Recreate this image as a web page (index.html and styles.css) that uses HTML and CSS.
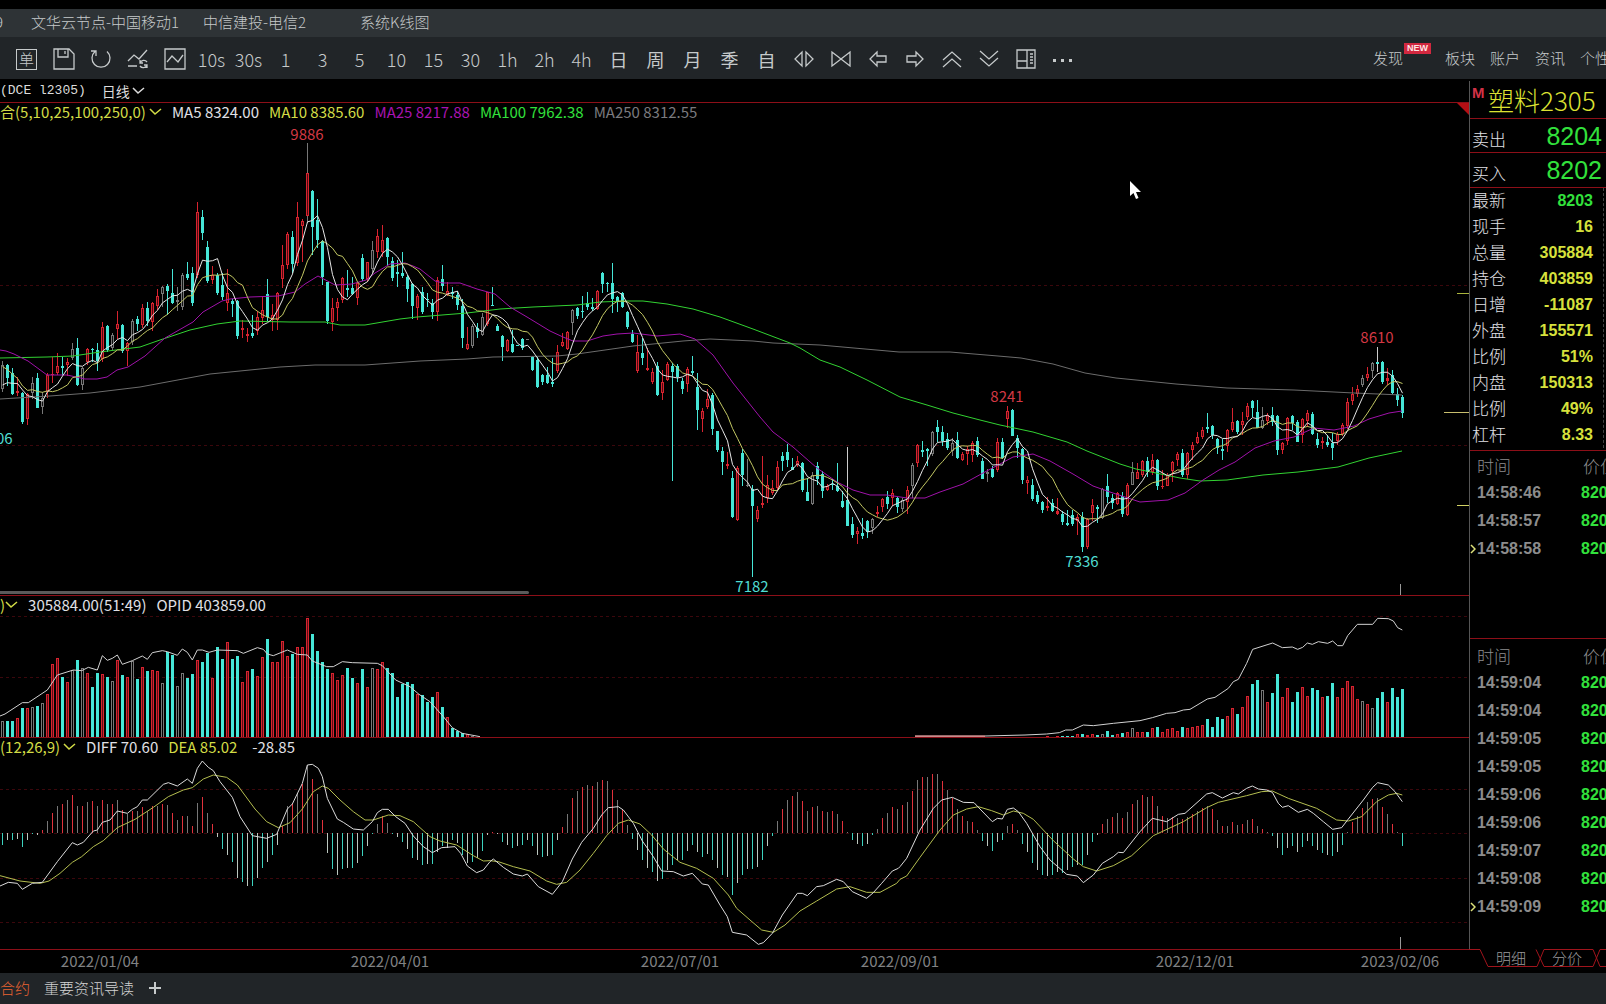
FILE: index.html
```html
<!DOCTYPE html>
<html lang="zh-CN">
<head>
<meta charset="utf-8">
<title>塑料2305 日线</title>
<link rel="stylesheet" href="styles.css">
</head>
<body>
<nav class="menubar" aria-label="节点">
  <a class="menu-edge" href="#">9</a>
  <a class="menu-node" href="#">文华云节点-中国移动1</a>
  <a class="menu-node" href="#">中信建投-电信2</a>
  <a class="menu-title" href="#">系统K线图</a>
</nav>

<header class="toolbar">
  <div class="tools">
    <button class="tool"><span class="tool-box">单</span></button>
    <button class="tool" aria-label="保存"><svg class="icon" viewBox="0 0 22 22"><path d="M1 1h15l5 5v15H1zM5 1v8h10V1M12 3v3"/></svg></button>
    <button class="tool" aria-label="刷新"><svg class="icon" viewBox="0 0 22 22"><path d="M5 3.500A9 9 0 1 0 17 3.500M1 3h5v5"/></svg></button>
    <button class="tool" aria-label="切换"><svg class="icon" viewBox="0 0 22 22"><path d="M1 13l6-6 5 4 8-9M1 18h9M20 14a4 4 0 0 0-7 1M13 12v3h3M13 18a4 4 0 0 0 7-1M20 20v-3h-3"/></svg></button>
    <button class="tool" aria-label="分时图"><svg class="icon" viewBox="0 0 22 22"><path d="M1 1h20v20H1zM3 14l5-6 6 6 5-7"/></svg></button>
    <button class="tool">10s</button>
    <button class="tool">30s</button>
    <button class="tool">1</button>
    <button class="tool">3</button>
    <button class="tool">5</button>
    <button class="tool">10</button>
    <button class="tool">15</button>
    <button class="tool">30</button>
    <button class="tool">1h</button>
    <button class="tool">2h</button>
    <button class="tool">4h</button>
    <button class="tool tool-han">日</button>
    <button class="tool tool-han">周</button>
    <button class="tool tool-han">月</button>
    <button class="tool tool-han">季</button>
    <button class="tool tool-han">自</button>
    <button class="tool" aria-label="放宽"><svg class="icon" viewBox="0 0 22 22"><path d="M9 4v14l-7-7zM13 4v14l7-7z"/></svg></button>
    <button class="tool" aria-label="收窄"><svg class="icon" viewBox="0 0 22 22"><path d="M2 4v14l9-7zM20 4v14l-9-7z"/></svg></button>
    <button class="tool" aria-label="左移"><svg class="icon" viewBox="0 0 22 22"><path d="M10 4l-7 7 7 7v-4h9V8h-9z"/></svg></button>
    <button class="tool" aria-label="右移"><svg class="icon" viewBox="0 0 22 22"><path d="M12 4l7 7-7 7v-4H3V8h9z"/></svg></button>
    <button class="tool" aria-label="上一个"><svg class="icon" viewBox="0 0 22 22"><path d="M2 12l9-8 9 8M2 19l9-8 9 8"/></svg></button>
    <button class="tool" aria-label="下一个"><svg class="icon" viewBox="0 0 22 22"><path d="M2 3l9 8 9-8M2 10l9 8 9-8"/></svg></button>
    <button class="tool" aria-label="布局"><svg class="icon" viewBox="0 0 22 22"><path d="M2 2h18v18H2zM12 2v18M2 13h10M15 6h3M15 9h3M15 12h3M15 15h3"/></svg></button>
    <button class="tool" aria-label="更多"><svg class="icon" viewBox="0 0 22 22"><path class="dots" d="M1 11h3v3H1zM9 11h3v3H9zM17 11h3v3h-3z"/></svg></button>
  </div>
  <nav class="links" aria-label="功能">
    <a class="link-new" href="#">发现<span class="badge">NEW</span></a>
    <a href="#">板块</a>
    <a href="#">账户</a>
    <a href="#">资讯</a>
    <a href="#">个性化</a>
  </nav>
</header>

<div class="workspace">
  <main class="charts">
    <div class="chart-head">
      <span class="code">(DCE l2305)</span>
      <button class="period">日线<svg class="chevron" viewBox="0 0 13 8"><path d="M1 1l5 5 6-5"/></svg></button>
    </div>
    <section class="pane pane-price">
      <div class="legend">
        <button class="legend-btn">合(5,10,25,100,250,0)<svg class="chevron" viewBox="0 0 13 8"><path d="M1 1l5 5 6-5"/></svg></button>
        <span class="c-white">MA5 8324.00</span>
        <span class="c-yellow">MA10 8385.60</span>
        <span class="c-purple">MA25 8217.88</span>
        <span class="c-green">MA100 7962.38</span>
        <span class="c-gray">MA250 8312.55</span>
      </div>
      <svg class="plot" id="price" role="img" aria-label="K线"></svg>
      <div class="scrollbar"></div>
    </section>
    <section class="pane pane-volume">
      <div class="legend">
        <button class="legend-btn legend-tight">)<svg class="chevron" viewBox="0 0 13 8"><path d="M1 1l5 5 6-5"/></svg></button>
        <span class="c-white">305884.00(51:49)</span>
        <span class="c-white">OPID 403859.00</span>
      </div>
      <svg class="plot" id="volume" role="img" aria-label="成交量"></svg>
    </section>
    <section class="pane pane-macd">
      <div class="legend">
        <button class="legend-btn">(12,26,9)<svg class="chevron" viewBox="0 0 13 8"><path d="M1 1l5 5 6-5"/></svg></button>
        <span class="c-white">DIFF 70.60</span>
        <span class="c-yellow">DEA 85.02</span>
        <span class="c-white last-value">-28.85</span>
      </div>
      <svg class="plot" id="macd" role="img" aria-label="MACD"></svg>
    </section>
    <svg class="axis" id="axis" role="img" aria-label="日期"></svg>
  </main>

  <aside class="panel">
    <div class="quote">
      <h1 class="contract"><span class="mark">M</span>塑料2305</h1>
      <dl class="book">
        <div><dt>卖出</dt><dd>8204</dd></div>
        <div><dt>买入</dt><dd>8202</dd></div>
      </dl>
      <dl class="stats">
        <div><dt>最新</dt><dd class="up">8203</dd></div>
        <div><dt>现手</dt><dd>16</dd></div>
        <div><dt>总量</dt><dd>305884</dd></div>
        <div><dt>持仓</dt><dd>403859</dd></div>
        <div><dt>日增</dt><dd>-11087</dd></div>
        <div><dt>外盘</dt><dd>155571</dd></div>
        <div><dt>比例</dt><dd>51%</dd></div>
        <div><dt>内盘</dt><dd>150313</dd></div>
        <div><dt>比例</dt><dd>49%</dd></div>
        <div><dt>杠杆</dt><dd>8.33</dd></div>
      </dl>
      <div class="ticks ticks-top">
        <table>
          <thead><tr><th class="flag"></th><th class="time">时间</th><th>价位</th></tr></thead>
          <tbody>
            <tr><td></td><td>14:58:46</td><td>8203</td></tr>
            <tr><td></td><td>14:58:57</td><td>8203</td></tr>
            <tr><td><svg class="pointer" viewBox="0 0 6 10"><path d="M1 1l4 4-4 4"/></svg></td><td>14:58:58</td><td>8203</td></tr>
          </tbody>
        </table>
      </div>
      <div class="ticks ticks-all">
        <table>
          <thead><tr><th class="flag"></th><th class="time">时间</th><th>价位</th></tr></thead>
          <tbody>
            <tr><td></td><td>14:59:04</td><td>8203</td></tr>
            <tr><td></td><td>14:59:04</td><td>8203</td></tr>
            <tr><td></td><td>14:59:05</td><td>8203</td></tr>
            <tr><td></td><td>14:59:05</td><td>8203</td></tr>
            <tr><td></td><td>14:59:06</td><td>8203</td></tr>
            <tr><td></td><td>14:59:06</td><td>8203</td></tr>
            <tr><td></td><td>14:59:07</td><td>8203</td></tr>
            <tr><td></td><td>14:59:08</td><td>8203</td></tr>
            <tr><td><svg class="pointer" viewBox="0 0 6 10"><path d="M1 1l4 4-4 4"/></svg></td><td>14:59:09</td><td>8203</td></tr>
          </tbody>
        </table>
      </div>
    </div>
    <div class="tabs">
      <svg class="tab-lines" aria-hidden="true"><path d="M0 .5h11l8 17h49l7-17h49l7 17h9M67 .5l8 17h49l7-17h9"/></svg>
      <button>明细</button>
      <button>分价</button>
    </div>
  </aside>
</div>

<footer class="bottombar">
  <a class="hot" href="#">合约</a>
  <a href="#">重要资讯导读</a>
  <button aria-label="新增"><svg class="plus" viewBox="0 0 14 14"><path d="M7 1v12M1 7h12"/></svg></button>
</footer>

<svg class="cursor" viewBox="0 0 12 18" aria-hidden="true"><path d="M0 0v15l3.500-3 2.500 6 2.500-1-2.500-6H11z"/></svg>
<script src="chart.js"></script>
</body>
</html>
```

FILE: styles.css
```css
* { box-sizing: border-box; }

body {
  margin: 0;
  padding-top: 9px;
  min-height: 100vh;
  display: flex;
  flex-direction: column;
  overflow: hidden;
  background: #000;
  color: #c6cacb;
  font: 15px/20px "Noto Sans CJK SC", "Noto Sans", sans-serif;
}

a { color: inherit; text-decoration: none; white-space: nowrap; }
button { border: 0; padding: 0; background: none; color: inherit; font: inherit; white-space: nowrap; }
dl, dd, h1 { margin: 0; }
svg { display: block; flex: none; fill: none; }

.menubar { display: flex; align-items: center; height: 28px; padding-bottom: 2px; background: #2e3336; font-weight: 300; }
.menu-edge { width: 31px; direction: rtl; padding-right: 28px; }
.menu-node { margin-right: 24px; }
.menu-title { margin-left: 30px; }

.toolbar { display: flex; align-items: center; height: 42px; padding-left: 8px; background: #212528; font-weight: 300; }
.tools { display: flex; flex: none; }
.tool {
  display: flex; align-items: center; justify-content: center;
  width: 37px; height: 42px; padding-top: 2px;
  font-size: 18px; line-height: 40px; font-weight: 300;
}
.tool-han { font-weight: 400; }
.tool-box { width: 21px; height: 21px; border: 1px solid #c6cacb; font-size: 15px; line-height: 18px; }
.icon { width: 22px; height: 22px; stroke: #c6cacb; stroke-width: 1.3; }
.dots { fill: #c6cacb; stroke: none; }

.links { display: flex; gap: 15px; margin-left: auto; width: 233px; overflow: hidden; }
.link-new { display: flex; width: 57px; height: 42px; padding-top: 11px; }
.links a:not(.link-new) { padding-top: 11px; }
.badge {
  margin: -5px 0 0 1px; height: 11px; padding: 0 3px;
  background: #d2283f; color: #ffe4e6;
  font: bold 9px/11px "Liberation Sans", sans-serif;
}

.workspace { display: flex; flex: 1; }
.charts { flex: 1; min-width: 0; display: flex; flex-direction: column; }
.chart-head { display: flex; align-items: center; gap: 16px; height: 24px; border-bottom: 1px solid #8c0f18; color: #dcdcdc; }
.code { font: 13px/20px "Liberation Mono", monospace; }
.period { display: flex; align-items: center; gap: 2px; font-size: 14px; }
.chevron { width: 13px; height: 8px; stroke: currentColor; stroke-width: 1.5; }

.pane { position: relative; border-bottom: 1px solid #8c0f18; }
.pane-price { height: 493px; }
.pane-volume { height: 142px; }
.pane-macd { height: 212px; }
.legend { position: absolute; top: -1px; left: 0; display: flex; gap: 10px; white-space: nowrap; }
.legend-btn { display: flex; align-items: center; gap: 3px; color: #d2dc46; }
.legend-tight { gap: 0; }
.pane-macd .last-value { margin-left: 5px; }
.plot { width: 100%; height: 100%; overflow: hidden; }
.axis { width: 100%; height: 23px; }
.scrollbar { position: absolute; left: 0; bottom: 1px; width: 36%; height: 3px; background: #5a5a5a; border-radius: 0 2px 2px 0; }

.c-white { color: #e0e0e6; }
.c-yellow { color: #d2dc46; }
.c-purple { color: #a814b0; }
.c-green { color: #32e13c; }
.c-gray { color: #7a7a7e; }

text { font: 15px "Noto Sans CJK SC", sans-serif; text-anchor: middle; }
.tag-high { fill: #d23844; }
.tag-low { fill: #50dcd2; }
.tag-date { fill: #808284; }

.panel { flex: none; width: 137px; display: flex; flex-direction: column; overflow: hidden; }
.quote { flex: 1; margin-top: 2px; border-left: 1px solid #555; overflow: hidden; }
.contract {
  display: flex; height: 38px; padding-left: 2px; border-bottom: 1px solid #8c0f18;
  color: #dce132; font-size: 26px; line-height: 37px; font-weight: 300; white-space: nowrap;
}
.mark { width: 16px; color: #d23246; font: bold 15px/24px "Liberation Sans", sans-serif; }
.book > div, .stats > div { display: flex; justify-content: space-between; padding-left: 2px; }
.book > div { height: 34px; border-bottom: 1px solid #8c0f18; padding-right: 4px; }
.book > div:last-child { height: 35px; }
dt { color: #e1e1e6; font-size: 17px; font-weight: 300; }
.book dt { line-height: 39px; }
.book dd { color: #32e13c; font: 25px/35px "Liberation Sans", sans-serif; }
.stats { margin-right: 2px; border-right: 1px dashed #444; }
.stats > div { height: 26px; padding-right: 10px; }
.stats dt { line-height: 24px; }
.stats dd { color: #d7e13c; font: bold 16px/25px "Liberation Sans", sans-serif; }
.stats dd.up { color: #32e13c; }

.ticks { border-top: 1px solid #8c0f18; padding-top: 2px; overflow: hidden; }
.ticks-top { margin-top: 2px; height: 188px; }
.ticks-all { padding-top: 4px; }
table { table-layout: fixed; width: 160px; border-collapse: collapse; }
th, td { padding: 0; text-align: left; }
th { height: 26px; color: #8c8c8e; font-size: 17px; line-height: 26px; font-weight: 300; }
th:last-child { padding-left: 2px; }
td { height: 28px; color: #8c8c8c; font: bold 16px/28px "Liberation Sans", sans-serif; }
td:last-child { color: #32e13c; }
.flag { width: 7px; }
.time { width: 104px; }
.pointer { width: 6px; height: 10px; stroke: #dce17a; stroke-width: 1.5; }

.tabs { position: relative; display: flex; gap: 26px; height: 24px; padding-left: 27px; color: #9a9a9c; font-weight: 300; }
.tabs button { position: relative; height: 18px; line-height: 16px; }
.tab-lines { position: absolute; top: 0; left: 0; width: 100%; height: 19px; stroke: #a0141c; }

.bottombar { display: flex; align-items: center; gap: 14px; height: 31px; padding-bottom: 1px; background: #212528; color: #d2d2d2; font-weight: 300; }
.hot { color: #eb6432; }
.plus { width: 14px; height: 14px; stroke: #c6cacb; stroke-width: 2; }

.cursor { position: absolute; left: 1130px; top: 181px; width: 12px; height: 18px; fill: #fff; }
```

FILE: chart.js
```js
const NS = 'http://www.w3.org/2000/svg';
const STEP = 5;
const CYAN = '#46e6d7', RED = '#d7232f', GRAY = '#777', GRID = '#3c070c';

function add(svg, name, attrs, text) {
  const el = document.createElementNS(NS, name);
  for (const k in attrs) el.setAttribute(k, attrs[k]);
  if (text) el.textContent = text;
  svg.appendChild(el);
}
const box = (svg, x, y, w, h, fill) =>
  add(svg, 'rect', { x, y: Math.round(y), width: w, height: Math.max(1, Math.round(h)), fill });
const line = (svg, pts, stroke, width) =>
  add(svg, 'polyline', { points: pts.map(p => p.join(',')).join(' '), stroke, 'stroke-width': width || 1 });
function grid(svg, rows) {
  rows.forEach(y => add(svg, 'line', { x1: 0, x2: '100%', y1: y + .5, y2: y + .5, stroke: GRID, 'stroke-dasharray': '3 3' }));
}
const nums = s => s.trim().split(/[\s,]+/).map(Number);
// Point lists hold thirds of a pixel, shifted by the origin of their block.
function pts(s, ox, oy) {
  const n = nums(s), out = [];
  for (let i = 0; i < n.length; i += 2) out.push([ox + n[i] / 3, oy + n[i + 1] / 3]);
  return out;
}
function plain(s, oy) {
  const n = nums(s), out = [];
  for (let i = 0; i < n.length; i += 2) out.push([n[i], n[i + 1] + oy]);
  return out;
}

// kind, high, body top, body bottom, low
const blocks = [
  [17, `g 722 735 808 815;c 733 735 775 800;c 745 758 820 825;r 770 812 818 828;c 815 820 907 910;r 818 822 898 915;g 770 790 820 835;c 760 773 863 865;g 815 835 862 880;r 760 765 815 835;r 712 762 765 790;r 700 737 757 765;c 710 737 742 765;r 715 725 735 770;g 670 687 713 720;c 655 685 795 798;g 740 745 795 810;r 685 687 725 735;c 683 687 691 725;c 670 690 722 755;r 605 622 718 725;c 615 618 690 695;g 640 645 685 690;r 572 612 628 655;c 612 615 693 698;r 665 670 695 738;g 597 602 665 675;c 588 597 612 632;r 552 565 615 625;c 545 563 603 618;r 545 548 605 632;r 507 527 558 570;g 497 500 522 560;c 493 498 512 587;c 448 520 550 553;g 500 540 545 572;g 460 465 560 570;c 425 462 473 480;c 440 460 550 557;r 247 277 465 475;c 270 290 337 360;c 362 380 482 487;r 437 465 480 492;c 460 465 518 525;c 460 495 530 540;r 447 520 550 572;c 537 543 552 592;c 540 543 647 658;r 600 625 630 655;r 625 643 650 668;c 585 640 648 653;r 573 590 632 645;r 527 570 595 610;c 478 522 590 608;r 553 585 600 635;r 515 518 600 630;r 375 435 478 503;r 337 341 435 447;c 333 350 432 460;r 245 292 430 437;r 297 303 317 425;r 70 160 290 310;c 210 213 320 405;c 237 300 360 385;c 360 362 470 495;c 485 487 605 612;r 535 563 605 635;r 533 545 562 602;r 470 473 540 548;c 450 503 510 530;c 470 503 520 525;r 487 490 535 555;c 403 415 478 485;r 425 427 478 485;g 362 390 448 460;r 328 347 395 415;r 315 360 395 410;c 352 355 412 440;c 410 422 472 482;c 420 455 462 502;c 397 460 470 475;c 465 470 505 545;c 490 492 557 597;r 523 527 562 600`],
  [117, `c 200 215 275 282;c 220 238 242 262;c 238 250 277 298;r 170 180 277 303;c 135 177 198 212;r 187 212 225 230;c 200 215 222 237;c 212 225 255 268;c 237 258 355 383;r 320 372 388 390;g 312 318 378 385;c 310 325 338 355;g 280 290 345 350;r 215 217 313 318;c 202 255 259 260;c 313 317 333 335;c 345 348 380 422;r 358 361 393 397;c 330 373 397 398;c 375 375 378 378;c 355 357 385 390;g 357 357 360 360;c 408 410 448 452;c 410 420 502 503;c 463 465 485 497;c 440 465 490 492;c 413 485 490 500;r 375 397 455 460;r 340 367 378 382;r 333 337 387 390;g 268 270 310 345;c 262 265 290 298;c 227 272 276 293;c 217 250 263 270;c 235 260 265 275;r 210 212 265 270;c 155 158 192 218;c 187 188 190 218;c 128 188 235 278;c 227 230 245 275;c 217 220 262 265;c 273 277 323 327;c 330 342 367 370;r 345 397 455 458;c 355 398 412 437;r 385 445 450 453;r 445 455 485 492;c 427 437 525 530;r 450 487 520 540;r 427 433 480 483;c 430 437 455 783;c 433 437 470 487;c 475 483 508 522;r 442 447 493 517;c 408 453 458 465;c 458 500 570 630;r 565 573 598 638;r 507 537 560 567;c 520 525 628 647;c 632 634 690 695;c 680 692 725 765;r 695 732 738 747;c 753 775 892 893;r 737 745 900 903;c 687 700 767 797;g 718 795 798 803;c 795 808 860 1070;r 858 870 897 905;r 708 850 857 863;r 765 795 835 848;r 780 805 820 825;r 723 740 803 810;c 697 708 723 753;c 672 697 722 742;c 715 742 750 752;r 708 722 735 740;c 727 730 812 818;c 775 815 843 845;g 755 765 853 855;c 727 737 775 795`],
  [237, `c 393 403 455 473;r 433 437 450 455;c 418 433 437 450;c 368 437 452 455;c 452 482 500 502;c 322 480 557 560;c 530 553 585 593;r 560 573 583 610;c 533 580 590 595;c 540 542 575 593;g 535 537 565 582;r 497 517 523 530;r 475 478 503 517;c 453 472 493 507;r 447 460 475 497;c 470 475 503 518;g 475 480 507 517;r 437 450 485 520;g 370 375 437 475;r 313 315 370 382;c 303 330 335 350;c 325 327 333 378;g 272 277 343 347;c 240 262 277 305;c 257 277 305 318;c 280 298 325 332;g 295 310 335 350;c 277 300 353 358;r 335 343 360 363;r 317 327 342 375;r 303 310 345 365;c 290 302 345 350;c 355 362 415 417;g 387 395 400 427;c 378 387 410 413;r 293 305 390 395;c 295 305 353 357;r 197 212 237 263;c 208 210 287 290;c 285 295 325 355;c 323 328 422 430;r 408 420 430 462;c 417 435 477 483;c 453 465 487 493;c 483 487 510 520;r 470 497 502 512;c 478 490 515 518;r 475 513 522 527;c 513 522 545 555;c 510 548 553 558;c 510 525 552 557;r 523 530 543 587;c 515 530 620 635;r 535 538 622 628;r 477 495 520 543;c 495 502 507 550;g 443 448 535 537;c 402 437 470 488;c 463 475 490 508;r 455 458 490 495`],
  [197, `c 575 587 642 650;r 550 555 645 650;g 487 515 553 557;r 490 515 535 538;r 480 483 525 530;c 470 483 515 530;r 463 480 515 525;c 477 480 557 570;r 510 558 562 567;r 520 525 557 560;r 483 487 515 545;r 457 463 480 500;c 447 460 525 530;r 455 460 525 535;r 425 435 450 480;r 397 410 427 432;r 380 390 410 415;c 338 380 387 398;c 375 377 403 418;c 413 418 445 460;c 417 447 452 480;r 387 390 438 455;r 325 365 390 397;c 360 363 397 403;r 335 362 373 405;r 308 317 350 360;c 300 303 323 350;c 300 335 383 385;g 320 360 385 387;r 340 345 362 375;c 320 345 365 377;c 345 348 450 465;r 425 430 450 462;r 350 353 423 433;c 345 347 367 390;c 360 365 425 427;r 355 357 405 430;r 330 340 365 380;c 335 343 402 405;c 400 418 435 445;r 410 422 428 447;c 405 427 437 440;c 400 428 443 480;r 397 403 425 435;r 370 375 403 410;r 293 305 377 385;r 260 282 303 313;r 255 268 283 290;g 225 235 255 262;r 202 222 233 245;g 187 190 213 235;c 140 187 192 215;c 182 185 245 250;r 205 235 243 255;c 210 225 280 283;c 265 283 300 320;c 285 290 338 355`]
];
const candles = [];
blocks.forEach(([oy, rows]) => rows.split(';').forEach(row => {
  const [kind, ...v] = row.trim().split(' ');
  const [high, top, bottom, low] = v.map(n => oy + n / 3);
  candles.push({ kind, high, top, bottom, low });
}));

// price pane
const price = document.getElementById('price');
grid(price, [182, 342]);
candles.forEach((c, i) => {
  const x = i * STEP + 2, h = c.bottom - c.top;
  if (c.kind === 'c') {
    box(price, x, c.high, 1, c.low - c.high, i === 169 || i === 275 ? '#ccc' : CYAN);
    box(price, x - 1, c.top, 3, h, CYAN);
  } else {
    const color = c.kind === 'r' ? RED : GRAY;
    box(price, x, c.high, 1, c.low - c.high, i === 61 ? GRAY : color);
    box(price, x - 1, c.top, 3, h, color);
    if (h > 3) box(price, x, Math.round(c.top) + 1, 1, Math.round(h) - 2, c.kind === 'r' ? '#500a10' : '#111');
  }
});
const closes = [245, 245, 245, 245, 246, 287, 287, 287, 287].concat(candles.map(c => c.kind === 'c' ? c.bottom : c.top));
const average = n => candles.map((c, i) => {
  let sum = 0;
  for (let k = 0; k < n; k++) sum += closes[i + 9 - k];
  return [i * STEP + 2.5, sum / n];
});
line(price, plain(`0 399 50 396 90 393 140 387 210 374 280 367 315 365 365 365 420 361 467 359 493 357 557 356 577 354 633 346 683 341 710 339 753 341 773 343 820 345 899 352 950 352 998 356 1021 358 1053 364 1085 373 1116 378 1176 384 1227 388 1294 390 1354 393 1402 395`, -103), '#6c6c6c');
line(price, plain(`0 358 47 357 73 356 100 352 140 347 160 340 190 330 217 324 240 321 290 322 325 322 340 325 365 325 400 319 417 317 467 313 500 309 533 307 577 305 600 302 627 301 643 301 667 304 693 309 720 317 753 329 790 343 800 348 820 360 840 367 867 380 900 397 927 405 953 413 980 420 1000 425 1033 432 1067 442 1087 451 1120 464 1136 469 1156 473 1180 478 1200 481 1227 480 1263 475 1298 472 1338 467 1369 458 1402 451`, -103), '#32d232');
line(price, plain(`0 350 6 351 14 354 28 361 47 375 67 375 85 379 97 379 107 377 117 370 128 367 145 356 165 338 193 322 203 312 222 301 230 299 250 297 278 296 295 292 305 284 318 276 335 285 352 284 366 280 375 273 390 264 405 263 413 266 420 269 435 281 443 283 460 283 477 289 495 294 510 307 527 317 550 331 563 337 573 341 587 341 603 336 617 334 633 333 657 336 680 334 695 339 713 355 733 383 760 417 773 432 793 447 817 468 837 482 853 490 870 495 887 495 907 498 925 498 940 492 963 484 983 473 1000 464 1013 457 1033 454 1050 461 1073 474 1093 486 1110 492 1128 498 1140 502 1168 500 1185 493 1203 480 1219 470 1235 462 1255 448 1274 441 1294 437 1314 428 1334 430 1354 426 1369 419 1389 413 1402 411`, -103), '#a012aa');
line(price, average(10), '#c3c864');
line(price, average(5), '#e6e6e6');
[[307, 37, '9886', 'high'], [1377, 240, '8610', 'high'], [1007, 299, '8241', 'high'], [752, 489, '7182', 'low'], [1082, 464, '7336', 'low'], [-4, 341, '7806', 'low']]
  .forEach(([x, y, t, k]) => add(price, 'text', { x, y, class: 'tag-' + k }, t));
add(price, 'path', { d: 'M1457 0h12v12z', fill: '#b40f14' });
box(price, 1457, 190, 12, 1, '#aab43c');
box(price, 1444, 309, 25, 1, '#c8be6e');
box(price, 1457, 402, 12, 1, '#d2d264');
box(price, 1400, 481, 1, 11, '#999');

// volume pane
const volume = document.getElementById('volume');
grid(volume, [20, 81]);
const bar = (i, top) => {
  const kind = candles[i].kind, x = i * STEP + 1, h = 141 - top;
  box(volume, x, top, 3, h, kind === 'c' ? CYAN : kind === 'r' ? RED : GRAY);
  if (kind !== 'c' && h > 2) box(volume, x + 1, top + 1, 1, h - 1, kind === 'r' ? '#5f0d14' : '#000');
};
nums(`392 392 392 385 355 355 352 347 340 313 222 203 260 275 240 211 233 250 292 250 253 260 272 211 256 260 213 268 230 243 240 243 280 187 195 287 248 263 253 210 217 188 263 172 208 157 208 197 275 243 238 257 202 148 215 217 152 198 192 172 170 85 133 182 217 238 250 270 255 233 263 280 238 290 235 238 217 235 250 320 282 275 283 313 315 337 320 305 350 380 415 422 428 433 437 440`)
  .forEach((v, i) => bar(i, v / 3 - 6));
nums(`408 411 408 407 407 407 402 402 405 403 405 402 392 405 403 398 395 383 396 395 395 383 380 395 387 384 392 380 383 382 378 375 357 380 350 358 348 323 343 320 288 253 241 271 305 280 223 290 263 307 277 262 287 265 271 290 287 248 290 265 242 257 298 303 312 323 293 275 305 265 290 268`)
  .forEach((v, i) => bar(i + 209, v / 3 + 4));
line(volume, pts(`0 378 15 372 67 338 85 338 142 300 172 255 220 240 245 242 265 232 292 240 307 197 322 211 337 205 352 195 367 223 397 212 427 198 442 208 457 188 487 182 502 185 532 196 547 177 562 187 577 210 592 180 607 180 627 187 652 180 712 182 730 190 772 173 790 178 802 192 820 197 862 180 892 193 922 195 937 213 980 230 1000 230 1027 215 1057 218 1132 220 1147 227 1187 270 1230 290 1257 313 1290 335 1330 380 1357 413 1387 430 1440 440`, 0, -6), '#d2d2d2');
line(volume, pts(`45 409 255 409`, 900, 4), '#c88c8c', 2);
line(volume, pts(`255 408 375 405 440 402 478 398 497 390 517 390 550 375 580 377 640 370 720 362 757 353 800 340 825 338 850 330 870 328 922 297 945 292 985 265 1000 245 1015 238 1040 190 1058 148 1118 129 1147 143 1177 141 1193 148 1208 142 1222 129 1237 133 1255 125 1283 130 1298 123 1313 137 1328 137 1343 107 1372 73 1418 73 1433 55 1465 56 1480 63 1493 83 1507 90`, 900, 4), '#d2d2d2');

// MACD pane
const macd = document.getElementById('macd');
const ZERO = 95;
grid(macd, [51, 95, 140, 184]);
function hist(start, zero, s) {
  nums(s).forEach((v, k) => {
    const i = start + k, h = (zero - v) / 3, up = h > 0, odd = i % 2;
    box(macd, i * STEP + 2, up ? ZERO - h : ZERO, 1, Math.abs(h), up ? (odd ? '#777' : '#e1323c') : (odd ? '#bcc8c0' : '#3cd2be'));
  });
}
hist(0, 730, `767 752 752 748 773 752 730 735 722 695 670 650 642 632 617 650 650 637 633 650 630 643 642 630 662 673 665 663 653 665 650 650 642 647 670 690 678 678 710 640 623 670 702 742 777 795 818 865 878 888 888 865 835 818 797 765 710 650 642 610 583 525 568 612 690 790 837 857 838 835 835 820 800 770 733 702 680 700 732 742 757 777 805 812 827 822 823 787 770 775 752 760 795 820 818 805 785 737`);
hist(98, 280, `277 283 307 315 325 320 317 300 320 347 353 350 345 302 262 222 175 155 142 137 138 127 122 125 152 180 207 255 297 332 360 385 398 425 418 390 375 360 360 335 315 337 353 343 362 385 407 413 465 430 407 387 387 383 362 320 290 243 207 180 168 157 183 215 203 200 213 218 215 222 243 277 302 312 318 312 287 268 235 220 203 207 195 187 153 122 112 113 103 103`);
hist(188, 700, `543 572 595 627 650 665 668 690 725 740 755 728 722 678 673 690 732 758 790 812 827 828 827 818 820 812 803 797 795 765 728 705 672 657 653 640 655 637 613 602 587 592 590 620 648 655 652 655 657 652 642 635 625 620 628 660 678 678 668 675 672 660 657 680 688 697 708 745 765 745 740 757 742 725 738 750 760 765 770 758 735 697 668 650 625 608 597 595 623 642 673 697 738`);
const dea = [
  ...pts(`0 857 60 873 120 880 147 873 180 850 217 817 245 800 280 770 310 752 352 713 405 688 460 652 505 620 550 600 577 593 610 567 640 555 680 562 712 585 765 657 800 695 835 713 870 698 907 657 940 605 967 588 985 595 1020 630 1060 665 1095 690 1120 690 1165 675 1200 677 1240 695 1290 740 1320 753 1370 765 1420 797 1450 813`, 0, -148),
  ...pts(`0 362 25 365 70 380 120 393 170 423 200 433 230 427 270 390 310 340 350 287 385 250 415 240 450 252 485 285 520 327 570 367 620 385 670 415 715 465 740 505 780 540 815 570 850 577 885 555 930 513 980 483 1040 447 1080 440 1130 457 1170 457 1220 430`, 490, 2),
  ...pts(`0 838 20 828 60 772 120 690 160 645 200 627 235 620 275 632 310 645 340 633 370 640 400 658 460 722 520 777 550 800 590 813 640 797 695 767 760 707 850 665 920 623 955 607 1040 587 1085 575 1117 573 1165 595 1250 625 1310 660 1345 663 1385 650 1430 605 1465 585 1490 580 1507 585`, 900, -138)
];
const diff = [
  ...pts(`0 888 25 877 52 880 67 898 97 880 127 877 172 815 217 758 232 765 250 757 280 723 292 720 307 697 330 690 352 663 382 670 397 658 412 650 427 630 442 630 490 583 505 578 532 588 562 567 577 580 592 535 607 513 625 532 640 542 660 575 697 622 720 680 757 737 800 745 830 733 862 657 877 642 907 580 922 525 937 523 955 535 967 560 982 625 1012 687 1030 697 1060 717 1090 720 1117 695 1132 668 1147 658 1165 658 1187 680 1215 700 1240 738 1270 770 1297 788 1325 773 1365 770 1382 790 1402 828 1430 848 1450 840`, 0, -148),
  ...pts(`0 365 10 357 40 382 70 402 97 408 112 402 145 440 187 463 217 425 247 357 275 307 310 265 335 225 355 203 385 200 400 210 430 250 457 303 490 350 515 393 550 395 580 408 607 400 637 432 655 435 690 495 712 530 727 577 770 585 805 613 820 608 847 580 877 525 922 460 937 460 952 467 980 440 1000 437 1040 418 1060 425 1087 455 1130 475 1150 458 1175 430 1207 393 1225 385`, 490, 2),
  ...pts(`0 800 20 775 60 690 100 625 125 600 157 592 190 607 222 608 240 627 277 665 292 655 307 657 322 628 340 624 355 635 380 670 420 740 450 780 500 823 532 828 550 848 580 825 607 790 640 770 655 757 670 758 720 695 757 655 800 665 835 643 855 640 920 582 937 578 967 594 1000 578 1015 582 1040 565 1057 558 1075 567 1100 570 1117 577 1135 610 1147 622 1165 617 1195 637 1222 628 1240 640 1270 665 1298 688 1325 683 1345 657 1390 600 1418 562 1433 548 1465 555 1485 575 1507 605`, 900, -138)
];
line(macd, dea, '#b4be50');
line(macd, diff, '#dcdcdc');
box(macd, 1400, 199, 1, 12, '#999');

// date axis
const axis = document.getElementById('axis');
[[100, '2022/01/04'], [390, '2022/04/01'], [680, '2022/07/01'], [900, '2022/09/01'], [1195, '2022/12/01'], [1400, '2023/02/06']]
  .forEach(([x, t]) => add(axis, 'text', { x, y: 17, class: 'tag-date' }, t));
```
